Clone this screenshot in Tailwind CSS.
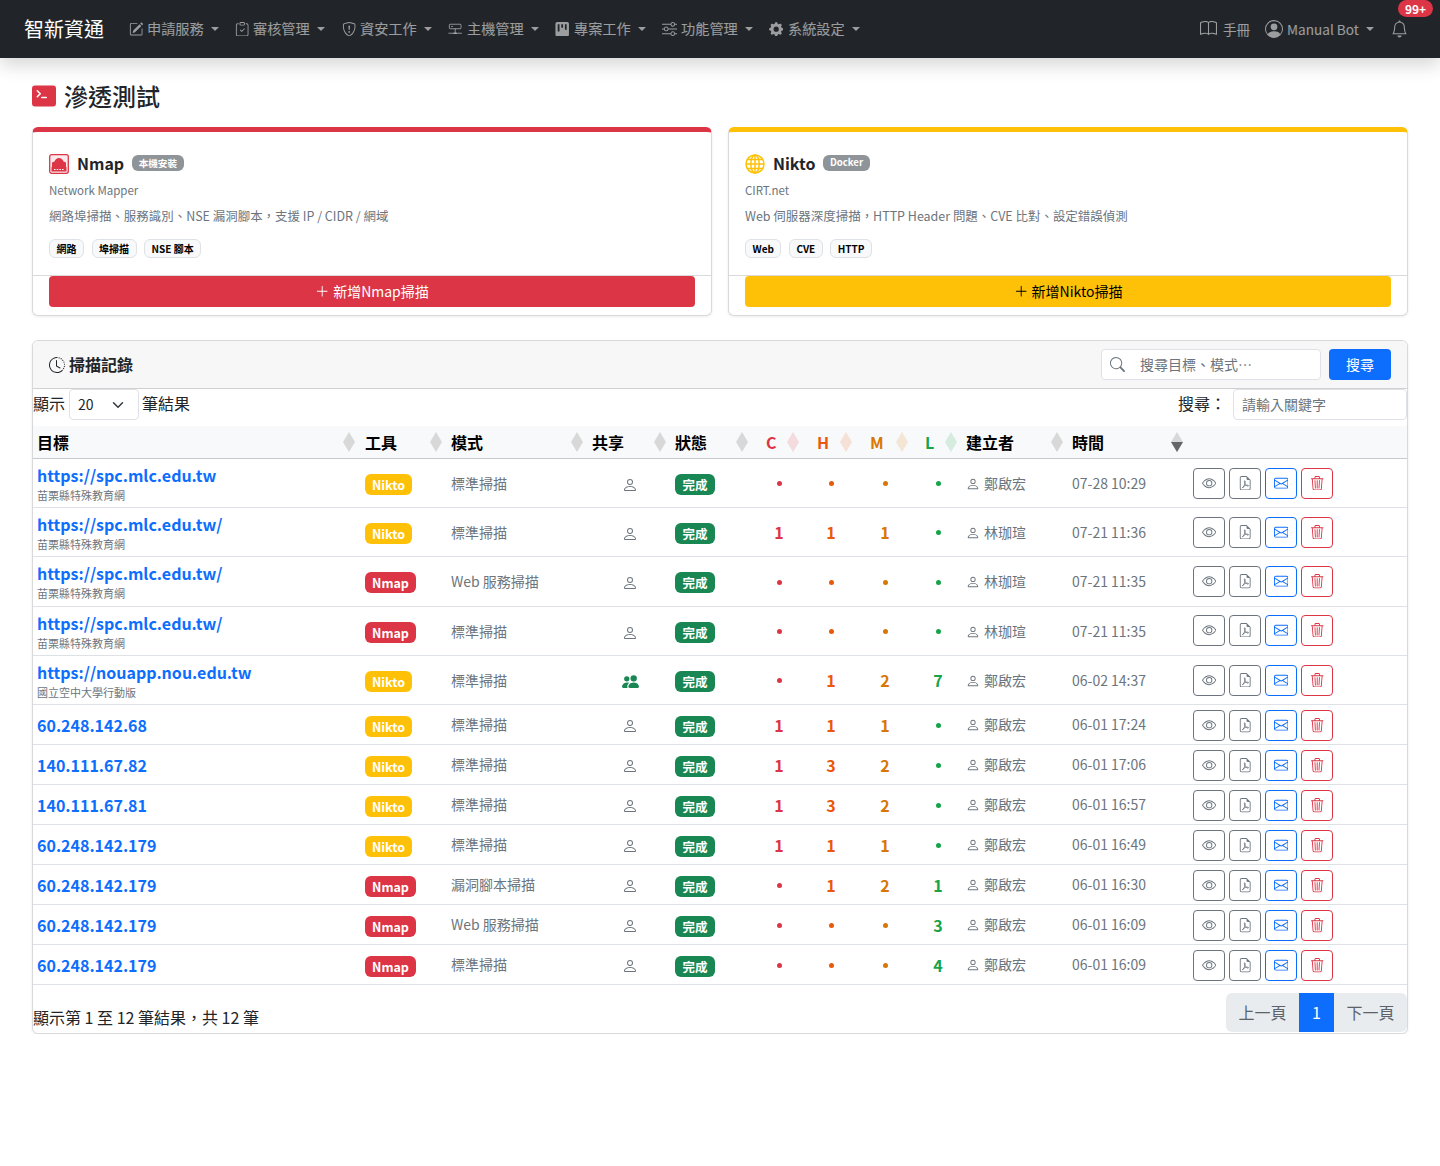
<!DOCTYPE html>
<html lang="zh-Hant">
<head>
<meta charset="utf-8">
<title>滲透測試</title>
<script src="https://cdn.jsdelivr.net/npm/@tailwindcss/browser@4"></script>
</head>
<body class="bg-white text-[#212529] font-['Noto_Sans_CJK_TC','Noto_Sans',sans-serif]">
<svg class="hidden" xmlns="http://www.w3.org/2000/svg">
<symbol id="i-sort" viewBox="0 0 12 20"><polygon points="6,0 12,10 0,10"/><polygon points="0,10 12,10 6,20"/></symbol>
<symbol id="i-person" viewBox="0 0 16 16"><path d="M8 8a3 3 0 1 0 0-6 3 3 0 0 0 0 6m2-3a2 2 0 1 1-4 0 2 2 0 0 1 4 0m4 8c0 1-1 1-1 1H3s-1 0-1-1 1-4 6-4 6 3 6 4m-1-.004c-.001-.246-.154-.986-.832-1.664C11.516 10.68 10.289 10 8 10s-3.516.68-4.168 1.332c-.678.678-.83 1.418-.832 1.664z"/></symbol>
<symbol id="i-people" viewBox="0 0 16 16"><path d="M7 14s-1 0-1-1 1-4 5-4 5 3 5 4-1 1-1 1zm4-6a3 3 0 1 0 0-6 3 3 0 0 0 0 6m-5.784 6A2.24 2.24 0 0 1 5 13c0-1.355.68-2.75 1.936-3.72A6.3 6.3 0 0 0 5 9c-4 0-5 3-5 4s1 1 1 1zM4.500 8a2.500 2.500 0 1 0 0-5 2.500 2.500 0 0 0 0 5"/></symbol>
<symbol id="i-eye" viewBox="0 0 16 16"><path d="M16 8s-3-5.500-8-5.500S0 8 0 8s3 5.500 8 5.500S16 8 16 8M1.173 8a13 13 0 0 1 1.660-2.043C4.120 4.668 5.880 3.500 8 3.500s3.879 1.168 5.168 2.457A13 13 0 0 1 14.828 8q-.086.130-.195.288c-.335.480-.830 1.120-1.465 1.755C11.879 11.332 10.119 12.500 8 12.500s-3.879-1.168-5.168-2.457A13 13 0 0 1 1.172 8z"/><path d="M8 5.500a2.500 2.500 0 1 0 0 5 2.500 2.500 0 0 0 0-5M4.500 8a3.500 3.500 0 1 1 7 0 3.500 3.500 0 0 1-7 0"/></symbol>
<symbol id="i-pdf" viewBox="0 0 16 16"><path d="M14 14V4.500L9.500 0H4a2 2 0 0 0-2 2v12a2 2 0 0 0 2 2h8a2 2 0 0 0 2-2M9.500 3A1.500 1.500 0 0 0 11 4.500h2V14a1 1 0 0 1-1 1H4a1 1 0 0 1-1-1V2a1 1 0 0 1 1-1h5.500z"/><path fill="none" stroke="currentColor" stroke-width=".9" d="M4.800 13.400c1.300-.9 3.200-4.400 3.200-7.400 0-1-.9-1-.9 0 0 2.200 2 5 3.800 5.300 1 .2 1-1 .2-1.100-1.800-.3-4.600.4-6.300 3.200z"/></symbol>
<symbol id="i-mail" viewBox="0 0 16 16"><path d="M0 4a2 2 0 0 1 2-2h12a2 2 0 0 1 2 2v8a2 2 0 0 1-2 2H2a2 2 0 0 1-2-2zm2-1a1 1 0 0 0-1 1v.217l7 4.200 7-4.200V4a1 1 0 0 0-1-1zm13 2.383-4.708 2.825L15 11.105zm-.034 6.876-5.640-3.471L8 9.583l-1.326-.795-5.640 3.470A1 1 0 0 0 2 13h12a1 1 0 0 0 .966-.741M1 11.105l4.708-2.897L1 5.383z"/></symbol>
<symbol id="i-trash" viewBox="0 0 16 16"><path d="M6.500 1h3a.5.5 0 0 1 .5.5v1H6v-1a.5.5 0 0 1 .5-.5M11 2.500v-1A1.500 1.500 0 0 0 9.500 0h-3A1.500 1.500 0 0 0 5 1.500v1H1.500a.5.5 0 0 0 0 1h.538l.853 10.660A2 2 0 0 0 4.885 16h6.230a2 2 0 0 0 1.994-1.840l.853-10.660h.538a.5.5 0 0 0 0-1zm1.958 1-.846 10.580a1 1 0 0 1-.997.920h-6.230a1 1 0 0 1-.997-.920L3.042 3.500zm-7.487 1a.5.5 0 0 1 .528.470l.5 8.500a.5.5 0 0 1-.998.060L5 5.030a.5.5 0 0 1 .47-.530Zm5.058 0a.5.5 0 0 1 .47.530l-.5 8.500a.5.5 0 1 1-.998-.060l.5-8.500a.5.5 0 0 1 .528-.470M8 4.500a.5.5 0 0 1 .5.5v8.500a.5.5 0 0 1-1 0V5a.5.5 0 0 1 .5-.5"/></symbol>
</svg>

<nav class="h-[58px] bg-[#212529] flex items-center pl-[24px] pr-[32px] shadow-[0_8px_16px_rgba(0,0,0,0.15)] text-white/55 text-[14.2px] relative">
  <span class="w-[97px] text-[20px] text-white leading-none">智新資通</span>
  <div class="flex items-center">
    <a class="flex items-center w-[106px] px-[8px]"><svg class="w-[14.4px] h-[14.4px] mr-[3.6px] shrink-0" viewBox="0 0 16 16" fill="currentColor"><path d="M15.502 1.940a.5.5 0 0 1 0 .706L14.459 3.690l-2-2L13.502.646a.5.5 0 0 1 .707 0l1.293 1.293zm-1.750 2.456-2-2L4.939 9.210a.5.5 0 0 0-.121.196l-.805 2.414a.25.25 0 0 0 .316.316l2.414-.805a.5.5 0 0 0 .196-.120l6.813-6.814z"/><path fill-rule="evenodd" d="M1 13.500A1.500 1.500 0 0 0 2.500 15h11a1.500 1.500 0 0 0 1.500-1.500v-6a.5.5 0 0 0-1 0v6a.5.5 0 0 1-.5.5h-11a.5.5 0 0 1-.5-.5v-11a.5.5 0 0 1 .5-.5H9a.5.5 0 0 0 0-1H2.500A1.500 1.500 0 0 0 1 2.500z"/></svg><span class="whitespace-nowrap">申請服務</span><i class="ml-[7px] w-0 h-0 border-x-[4px] border-t-[4px] border-x-transparent border-t-white/55"></i></a>
    <a class="flex items-center w-[107px] px-[8px]"><svg class="w-[14.4px] h-[14.4px] mr-[3.6px] shrink-0" viewBox="0 0 16 16" fill="currentColor"><path fill-rule="evenodd" d="M10.854 7.146a.5.5 0 0 1 0 .708l-3 3a.5.5 0 0 1-.708 0l-1.500-1.500a.5.5 0 1 1 .708-.708L7.500 9.793l2.646-2.647a.5.5 0 0 1 .708 0"/><path d="M4 1.500H3a2 2 0 0 0-2 2V14a2 2 0 0 0 2 2h10a2 2 0 0 0 2-2V3.500a2 2 0 0 0-2-2h-1v1h1a1 1 0 0 1 1 1V14a1 1 0 0 1-1 1H3a1 1 0 0 1-1-1V3.500a1 1 0 0 1 1-1h1z"/><path d="M9.500 1a.5.5 0 0 1 .5.5v1a.5.5 0 0 1-.5.5h-3a.5.5 0 0 1-.5-.5v-1a.5.5 0 0 1 .5-.5zm-3-1A1.500 1.500 0 0 0 5 1.500v1A1.500 1.500 0 0 0 6.500 4h3A1.500 1.500 0 0 0 11 2.500v-1A1.500 1.500 0 0 0 9.500 0z"/></svg><span class="whitespace-nowrap">審核管理</span><i class="ml-[7px] w-0 h-0 border-x-[4px] border-t-[4px] border-x-transparent border-t-white/55"></i></a>
    <a class="flex items-center w-[106px] px-[8px]"><svg class="w-[14.4px] h-[14.4px] mr-[3.6px] shrink-0" viewBox="0 0 16 16" fill="currentColor"><path d="M5.338 1.590a61 61 0 0 0-2.837.856.48.48 0 0 0-.328.390c-.554 4.157.726 7.190 2.253 9.188a10.700 10.700 0 0 0 2.287 2.233c.346.244.652.420.893.533q.180.085.293.118a1 1 0 0 0 .101.025 1 1 0 0 0 .100-.025q.114-.034.294-.118c.240-.113.547-.290.893-.533a10.700 10.700 0 0 0 2.287-2.233c1.527-1.997 2.807-5.031 2.253-9.188a.48.48 0 0 0-.328-.390c-.651-.213-1.750-.560-2.837-.855C9.552 1.290 8.531 1.067 8 1.067c-.530 0-1.552.223-2.662.524zM5.072.56C6.157.265 7.310 0 8 0s1.843.265 2.928.56c1.110.3 2.229.655 2.887.870a1.540 1.540 0 0 1 1.044 1.262c.596 4.477-.787 7.795-2.465 9.990a11.800 11.800 0 0 1-2.517 2.453 7 7 0 0 1-1.048.625c-.280.132-.581.240-.829.240s-.548-.108-.829-.240a7 7 0 0 1-1.048-.625 11.800 11.800 0 0 1-2.517-2.453C1.928 10.487.545 7.169 1.141 2.692A1.540 1.540 0 0 1 2.185 1.430 63 63 0 0 1 5.072.56"/><path d="M7.001 11a1 1 0 1 1 2 0 1 1 0 0 1-2 0M7.100 4.995a.905.905 0 1 1 1.800 0l-.35 3.507a.553.553 0 0 1-1.100 0z"/></svg><span class="whitespace-nowrap">資安工作</span><i class="ml-[7px] w-0 h-0 border-x-[4px] border-t-[4px] border-x-transparent border-t-white/55"></i></a>
    <a class="flex items-center w-[107px] px-[8px]"><svg class="w-[14.4px] h-[14.4px] mr-[4.6px] shrink-0" viewBox="0 0 16 16" fill="none" stroke="currentColor" stroke-width="1"><rect x="1.500" y="2.500" width="13" height="5" rx="1"/><path d="M3.500 5h2M8 7.500v5M0.500 12.500h15M6 12.500h4"/></svg><span class="whitespace-nowrap">主機管理</span><i class="ml-[7px] w-0 h-0 border-x-[4px] border-t-[4px] border-x-transparent border-t-white/55"></i></a>
    <a class="flex items-center w-[107px] px-[8px]"><svg class="w-[14.4px] h-[14.4px] mr-[4.6px] shrink-0" viewBox="0 0 16 16" fill="currentColor"><path fill-rule="evenodd" d="M2.500 0A2 2 0 0 0 .5 2v12a2 2 0 0 0 2 2h11a2 2 0 0 0 2-2V2a2 2 0 0 0-2-2zM3 2.500h2v8H3zm4 0h2v4H7zm4 0h2v6h-2z"/></svg><span class="whitespace-nowrap">專案工作</span><i class="ml-[7px] w-0 h-0 border-x-[4px] border-t-[4px] border-x-transparent border-t-white/55"></i></a>
    <a class="flex items-center w-[107px] px-[8px]"><svg class="w-[15px] h-[15px] mr-[4px] shrink-0" viewBox="0 0 16 16" fill="currentColor"><path fill-rule="evenodd" d="M11.500 2a1.500 1.500 0 1 0 0 3 1.500 1.500 0 0 0 0-3M9.050 3a2.500 2.500 0 0 1 4.900 0H16v1h-2.050a2.500 2.500 0 0 1-4.900 0H0V3zM4.500 7a1.500 1.500 0 1 0 0 3 1.500 1.500 0 0 0 0-3M2.050 8a2.500 2.500 0 0 1 4.900 0H16v1H6.950a2.500 2.500 0 0 1-4.900 0H0V8zm9.450 4a1.500 1.500 0 1 0 0 3 1.500 1.500 0 0 0 0-3m-2.450 1a2.500 2.500 0 0 1 4.900 0H16v1h-2.050a2.500 2.500 0 0 1-4.900 0H0v-1z"/></svg><span class="whitespace-nowrap">功能管理</span><i class="ml-[7px] w-0 h-0 border-x-[4px] border-t-[4px] border-x-transparent border-t-white/55"></i></a>
    <a class="flex items-center px-[8px]"><svg class="w-[14.4px] h-[14.4px] mr-[4.6px] shrink-0" viewBox="0 0 16 16" fill="currentColor"><path d="M9.405 1.050c-.413-1.400-2.397-1.400-2.810 0l-.1.340a1.464 1.464 0 0 1-2.105.872l-.31-.170c-1.283-.698-2.686.705-1.987 1.987l.169.311c.446.820.023 1.841-.872 2.105l-.34.100c-1.400.413-1.400 2.397 0 2.810l.34.100a1.464 1.464 0 0 1 .872 2.105l-.17.310c-.698 1.283.705 2.686 1.987 1.987l.311-.169a1.464 1.464 0 0 1 2.105.872l.1.340c.413 1.400 2.397 1.400 2.810 0l.1-.340a1.464 1.464 0 0 1 2.105-.872l.31.170c1.283.698 2.686-.705 1.987-1.987l-.169-.311a1.464 1.464 0 0 1 .872-2.105l.34-.100c1.400-.413 1.400-2.397 0-2.810l-.34-.100a1.464 1.464 0 0 1-.872-2.105l.17-.31c.698-1.283-.705-2.686-1.987-1.987l-.311.169a1.464 1.464 0 0 1-2.105-.872zM8 10.930a2.929 2.929 0 1 1 0-5.860 2.929 2.929 0 0 1 0 5.858z"/></svg><span class="whitespace-nowrap">系統設定</span><i class="ml-[7px] w-0 h-0 border-x-[4px] border-t-[4px] border-x-transparent border-t-white/55"></i></a>
  </div>
  <div class="ml-auto flex items-center text-[13.6px]">
    <svg class="w-[17px] h-[17px] mr-[6px]" viewBox="0 0 16 16" fill="currentColor"><path d="M1 2.828c.885-.37 2.154-.769 3.388-.893 1.330-.134 2.458.063 3.112.752v9.746c-.935-.530-2.120-.603-3.213-.493-1.180.120-2.370.461-3.287.811zm7.500-.141c.654-.689 1.782-.886 3.112-.752 1.234.124 2.503.523 3.388.893v9.923c-.918-.35-2.107-.692-3.287-.810-1.094-.111-2.278-.039-3.213.492zM8 1.783C7.015.936 5.587.81 4.287.94c-1.514.153-3.042.672-3.994 1.105A.5.5 0 0 0 0 2.500v11a.5.5 0 0 0 .707.455c.882-.4 2.303-.881 3.680-1.020 1.409-.142 2.590.087 3.223.877a.5.5 0 0 0 .78 0c.633-.79 1.814-1.019 3.222-.877 1.378.139 2.800.62 3.681 1.020A.5.5 0 0 0 16 13.500v-11a.5.5 0 0 0-.293-.455c-.952-.433-2.480-.952-3.994-1.105C10.413.809 8.985.936 8 1.783"/></svg>
    <span class="w-[42px] whitespace-nowrap">手冊</span>
    <svg class="w-[18px] h-[18px] mr-[4px]" viewBox="0 0 16 16" fill="currentColor"><path d="M11 6a3 3 0 1 1-6 0 3 3 0 0 1 6 0"/><path fill-rule="evenodd" d="M0 8a8 8 0 1 1 16 0A8 8 0 0 1 0 8m8-7a7 7 0 0 0-5.468 11.370C3.242 11.226 4.805 10 8 10s4.757 1.225 5.468 2.370A7 7 0 0 0 8 1"/></svg>
    <span class="w-[72px] whitespace-nowrap">Manual Bot</span>
    <i class="ml-[7px] w-0 h-0 border-x-[4px] border-t-[4px] border-x-transparent border-t-white/55"></i>
    <span class="relative ml-[17px]">
      <svg class="block w-[17px] h-[18px]" viewBox="0 0 16 16" fill="currentColor"><path d="M8 16a2 2 0 0 0 2-2H6a2 2 0 0 0 2 2M8 1.918l-.797.161A4 4 0 0 0 4 6c0 .628-.134 2.197-.459 3.742-.16.767-.376 1.566-.663 2.258h10.244c-.287-.692-.502-1.490-.663-2.258C12.134 8.197 12 6.628 12 6a4 4 0 0 0-3.203-3.920zM14.220 12c.223.447.481.801.78 1H1c.299-.199.557-.553.78-1C2.680 10.200 3 6.880 3 6c0-2.420 1.720-4.440 4.005-4.901a1 1 0 1 1 1.990 0A5 5 0 0 1 13 6c0 .88.32 4.200 1.220 6"/></svg>
      <span class="absolute left-[7px] top-[-20px] h-[17px] w-[35px] rounded-full bg-[#dc3545] text-white text-[12px] font-bold leading-[17px] text-center">99+</span>
    </span>
  </div>
</nav>

<main class="px-[32px]">
  <div class="flex items-center h-[69px] pt-[6px]">
    <svg class="w-[24px] h-[24px] mr-[8px] text-[#dc3545]" viewBox="0 0 16 16" fill="currentColor"><path d="M0 3a2 2 0 0 1 2-2h12a2 2 0 0 1 2 2v10a2 2 0 0 1-2 2H2a2 2 0 0 1-2-2zm9.500 5.500h-3a.5.5 0 0 0 0 1h3a.5.5 0 0 0 0-1m-6.354-.354a.5.5 0 1 0 .708.708l2-2a.5.5 0 0 0 0-.708l-2-2a.5.5 0 1 0-.708.708L4.793 6.500z"/></svg>
    <h1 class="text-[24px] font-medium leading-[30px] mt-[1px]">滲透測試</h1>
  </div>

  <div class="grid grid-cols-2 gap-4">
    <section class="h-[189px] rounded-[6px] border border-black/15 border-t-[5px] border-t-[#dc3545] shadow-[0_1px_3px_rgba(0,0,0,0.08)] flex flex-col">
      <div class="px-[16px] pt-[22px] flex-1">
        <div class="flex items-center h-[20px]">
          <svg class="w-[20px] h-[20px] mr-[8px]" viewBox="0 0 20 20"><rect x=".7" y=".7" width="18.600" height="18.600" rx="2" fill="#fbe9eb" stroke="#dc3545" stroke-width="1.300"/><path d="M3 14V8.500L5.500 7.500c.7-2.200 2.500-3.500 4.500-3.500s3.800 1.300 4.500 3.500l2.500 1V14z" fill="#dc3545"/><rect x="2.500" y="13" width="15" height="4.500" fill="#dc3545"/><path d="M5 15.500h10" stroke="#fff" stroke-width="1.200" stroke-dasharray="1.500 1.200"/></svg>
          <span class="text-[16px] font-bold leading-none -mt-[2px]">Nmap</span>
          <span class="ml-[8px] h-[16px] -mt-[2px] px-[6.5px] rounded-[6px] bg-[#8f9499] text-white text-[9.6px] font-bold leading-[16px]">本機安裝</span>
        </div>
        <p class="mt-[7px] text-[11.5px] leading-[18px] text-[#6c757d]">Network Mapper</p>
        <p class="mt-[7px] text-[12.48px] leading-[20px] text-[#6c757d]">網路埠掃描、服務識別、NSE 漏洞腳本，支援 IP / CIDR / 網域</p>
        <div class="mt-[13px] flex gap-[7.5px]">
          <span class="h-[19px] px-[6.5px] rounded-[6px] bg-[#f8f9fa] border border-[#dee2e6] text-[10px] font-bold leading-[17px] text-black">網路</span>
          <span class="h-[19px] px-[6.5px] rounded-[6px] bg-[#f8f9fa] border border-[#dee2e6] text-[10px] font-bold leading-[17px] text-black">埠掃描</span>
          <span class="h-[19px] px-[6.5px] rounded-[6px] bg-[#f8f9fa] border border-[#dee2e6] text-[10px] font-bold leading-[17px] text-black">NSE 腳本</span>
        </div>
      </div>
      <div class="border-t border-black/15 px-[16px] pb-[8px]">
        <a class="h-[31px] pb-[1px] rounded-[4px] bg-[#dc3545] text-white text-[14px] flex items-center justify-center"><svg class="w-[14.4px] h-[14.4px] mr-[3.600px]" viewBox="0 0 16 16" fill="currentColor"><path fill-rule="evenodd" d="M8 2a.5.5 0 0 1 .5.5v5h5a.5.5 0 0 1 0 1h-5v5a.5.5 0 0 1-1 0v-5h-5a.5.5 0 0 1 0-1h5v-5A.5.5 0 0 1 8 2"/></svg>新增Nmap掃描</a>
      </div>
    </section>
    <section class="h-[189px] rounded-[6px] border border-black/15 border-t-[5px] border-t-[#ffc107] shadow-[0_1px_3px_rgba(0,0,0,0.08)] flex flex-col">
      <div class="px-[16px] pt-[22px] flex-1">
        <div class="flex items-center h-[20px]">
          <svg class="w-[20px] h-[20px] mr-[8px]" viewBox="0 0 20 20" fill="none" stroke="#ffc107" stroke-width="1.500"><circle cx="10" cy="10" r="9"/><ellipse cx="10" cy="10" rx="4.200" ry="9"/><path d="M10 1v18M1 10h18M2.300 5.500h15.400M2.300 14.500h15.400"/></svg>
          <span class="text-[16px] font-bold leading-none -mt-[2px]">Nikto</span>
          <span class="ml-[8px] h-[16px] -mt-[2px] px-[6.5px] rounded-[6px] bg-[#8f9499] text-white text-[9.6px] font-bold leading-[15px]">Docker</span>
        </div>
        <p class="mt-[7px] text-[11.5px] leading-[18px] text-[#6c757d]">CIRT.net</p>
        <p class="mt-[7px] text-[12.48px] leading-[20px] text-[#6c757d]">Web 伺服器深度掃描，HTTP Header 問題、CVE 比對、設定錯誤偵測</p>
        <div class="mt-[13px] flex gap-[7.5px]">
          <span class="h-[19px] px-[6.5px] rounded-[6px] bg-[#f8f9fa] border border-[#dee2e6] text-[10px] font-bold leading-[17px] text-black">Web</span>
          <span class="h-[19px] px-[6.5px] rounded-[6px] bg-[#f8f9fa] border border-[#dee2e6] text-[10px] font-bold leading-[17px] text-black">CVE</span>
          <span class="h-[19px] px-[6.5px] rounded-[6px] bg-[#f8f9fa] border border-[#dee2e6] text-[10px] font-bold leading-[17px] text-black">HTTP</span>
        </div>
      </div>
      <div class="border-t border-black/15 px-[16px] pb-[8px]">
        <a class="h-[31px] pb-[1px] rounded-[4px] bg-[#ffc107] text-black text-[14px] flex items-center justify-center"><svg class="w-[14.4px] h-[14.4px] mr-[3.600px]" viewBox="0 0 16 16" fill="currentColor"><path fill-rule="evenodd" d="M8 2a.5.5 0 0 1 .5.5v5h5a.5.5 0 0 1 0 1h-5v5a.5.5 0 0 1-1 0v-5h-5a.5.5 0 0 1 0-1h5v-5A.5.5 0 0 1 8 2"/></svg>新增Nikto掃描</a>
      </div>
    </section>
  </div>

  <section class="mt-[24px] h-[694px] rounded-[6px] border border-black/15 shadow-[0_1px_3px_rgba(0,0,0,0.08)] overflow-hidden">
    <div class="h-[48px] bg-[#f7f7f7] border-b border-[#d0d0d0] flex items-center pl-[16px] pr-[16px]">
      <svg class="w-[16px] h-[16px] mr-[4px]" viewBox="0 0 16 16" fill="currentColor"><path d="M8.515 1.019A7 7 0 0 0 8 1V0a8 8 0 0 1 .589.022zm2.004.45a7 7 0 0 0-.985-.299l.219-.976q.576.129 1.126.342zm1.370.71a7 7 0 0 0-.439-.27l.493-.87a8 8 0 0 1 .979.654l-.615.789a7 7 0 0 0-.418-.302zm1.834 1.790a7 7 0 0 0-.653-.796l.724-.69q.406.429.747.91zm.744 1.352a7 7 0 0 0-.214-.468l.893-.45a8 8 0 0 1 .45 1.088l-.95.313a7 7 0 0 0-.179-.483m.53 2.507a7 7 0 0 0-.1-1.025l.985-.17q.1.58.116 1.170zm-.131 1.538q.05-.254.081-.51l.993.123a8 8 0 0 1-.23 1.155l-.964-.267q.069-.247.12-.501m-.952 2.379q.276-.436.486-.908l.914.405q-.24.54-.555 1.038zm-.964 1.205q.183-.183.35-.378l.758.653a8 8 0 0 1-.401.432z"/><path d="M8 1a7 7 0 1 0 4.950 11.950l.707.707A8.001 8.001 0 1 1 8 0z"/><path d="M7.500 3a.5.5 0 0 1 .5.5v5.210l3.248 1.856a.5.5 0 0 1-.496.868l-3.500-2A.5.5 0 0 1 7 9V3.500a.5.5 0 0 1 .5-.5"/></svg>
      <h2 class="text-[16px] font-bold mb-[2px]">掃描記錄</h2>
      <div class="ml-auto flex items-center gap-[8px]">
        <div class="w-[220px] h-[31px] bg-white border border-[#dee2e6] rounded-[4px] flex items-center pl-[8px]">
          <svg class="w-[15px] h-[15px] text-[#6c757d] mr-[15px] shrink-0" viewBox="0 0 16 16" fill="currentColor"><path d="M11.742 10.344a6.500 6.500 0 1 0-1.397 1.398h-.001q.044.06.098.115l3.850 3.850a1 1 0 0 0 1.415-1.414l-3.850-3.850a1 1 0 0 0-.115-.1zM12 6.500a5.500 5.500 0 1 1-11 0 5.500 5.500 0 0 1 11 0"/></svg>
          <span class="text-[14px] text-[#6c757d] whitespace-nowrap">搜尋目標、模式…</span>
        </div>
        <a class="w-[62px] h-[31px] rounded-[4px] bg-[#0d6efd] text-white text-[14px] flex items-center justify-center">搜尋</a>
      </div>
    </div>

    <div class="h-[37px] flex items-start">
      <div class="h-[31px] flex items-center text-[16px]">
        <span class="mb-[3px]">顯示</span>
        <div class="w-[70px] h-[31px] ml-[4px] mr-[3px] bg-white border border-[#dee2e6] rounded-[4px] flex items-center justify-between pl-[8px] pr-[14px] text-[14px]">20<svg class="w-[12px] h-[12px]" viewBox="0 0 16 16" fill="none" stroke="#343a40" stroke-width="2" stroke-linecap="round" stroke-linejoin="round"><path d="m2 5 6 6 6-6"/></svg></div>
        <span class="mb-[3px]">筆結果</span>
      </div>
      <div class="ml-auto h-[31px] flex items-center text-[16px]">
        <span class="w-[55px] mb-[3px]">搜尋：</span>
        <input class="w-[174px] h-[31px] bg-white border border-[#dee2e6] rounded-[4px] px-[8px] pb-[2px] text-[14px] placeholder:text-[#6c757d]" placeholder="請輸入關鍵字">
      </div>
    </div>

    <table class="w-[1374px] table-fixed border-separate border-spacing-0 [&_td]:border-b [&_td]:border-[#dee2e6] [&_td]:px-[5px] [&_td]:align-middle [&_td:first-child]:pl-[4px] [&_th:first-child]:pl-[4px] [&_th]:relative [&_th]:h-[33px] [&_th]:bg-[#f8f9fa] [&_th]:border-b [&_th]:border-[#c8c9ca] [&_th]:px-[5px] [&_th]:text-left [&_th]:text-[16px] [&_th]:font-bold [&_th]:text-black">
      <colgroup><col class="w-[327px]"><col class="w-[86px]"><col class="w-[141px]"><col class="w-[83px]"><col class="w-[91px]"><col class="w-[51px]"><col class="w-[53px]"><col class="w-[55px]"><col class="w-[41px]"><col class="w-[106px]"><col class="w-[121px]"><col class="w-[219px]"></colgroup>
      <thead>
        <tr>
          <th>目標<svg class="absolute right-[5px] top-[6px] w-[12px] h-[20px] text-[#d8d8d8] fill-current"><use href="#i-sort"/></svg></th>
          <th>工具<svg class="absolute right-[4px] top-[6px] w-[12px] h-[20px] text-[#d8d8d8] fill-current"><use href="#i-sort"/></svg></th>
          <th>模式<svg class="absolute right-[4px] top-[6px] w-[12px] h-[20px] text-[#d8d8d8] fill-current"><use href="#i-sort"/></svg></th>
          <th>共享<svg class="absolute right-[4px] top-[6px] w-[12px] h-[20px] text-[#d8d8d8] fill-current"><use href="#i-sort"/></svg></th>
          <th>狀態<svg class="absolute right-[13px] top-[6px] w-[12px] h-[20px] text-[#d8d8d8] fill-current"><use href="#i-sort"/></svg></th>
          <th class="text-[#dc3545]!">C<svg class="absolute right-[13px] top-[6px] w-[12px] h-[20px] text-[#dc3545]/15 fill-current"><use href="#i-sort"/></svg></th>
          <th class="text-[#ea580c]!">H<svg class="absolute right-[13px] top-[6px] w-[12px] h-[20px] text-[#ea580c]/15 fill-current"><use href="#i-sort"/></svg></th>
          <th class="text-[#d97706]!">M<svg class="absolute right-[12px] top-[6px] w-[12px] h-[20px] text-[#d97706]/15 fill-current"><use href="#i-sort"/></svg></th>
          <th class="text-[#16a34a]!">L<svg class="absolute right-[4px] top-[6px] w-[12px] h-[20px] text-[#16a34a]/15 fill-current"><use href="#i-sort"/></svg></th>
          <th>建立者<svg class="absolute right-[4px] top-[6px] w-[12px] h-[20px] text-[#d8d8d8] fill-current"><use href="#i-sort"/></svg></th>
          <th>時間<svg class="absolute right-[5px] top-[6px] w-[12px] h-[20px] text-[#d8d8d8] fill-current"><use href="#i-sort"/></svg><svg class="absolute right-[5px] top-[16px] w-[12px] h-[10px] text-[#666] fill-current" viewBox="0 0 12 10"><polygon points="0,0 12,0 6,10"/></svg></th>
          <th></th>
        </tr>
      </thead>
      <tbody class="text-[14px] text-[#6c757d]">
        <!-- row 1 -->
        <tr class="h-[49px]">
          <td class="pt-[2px]"><a class="block text-[16px] font-bold leading-[21px] text-[#0d6efd]">https://spc.mlc.edu.tw</a><span class="block text-[11px] leading-[16px] mt-[1px]">苗栗縣特殊教育網</span></td>
          <td><span class="inline-block relative top-[1px] w-[47px] h-[21px] rounded-[6px] bg-[#ffc107] text-white text-[12.5px] font-bold leading-[21px] text-center">Nikto</span></td>
          <td>標準掃描</td>
          <td class="text-center"><svg class="inline-block w-[16px] h-[16px] fill-current ml-[3px]"><use href="#i-person"/></svg></td>
          <td><span class="inline-block relative top-[1px] w-[40px] h-[21px] rounded-[6px] bg-[#198754] text-white text-[12.5px] font-bold leading-[21px] text-center">完成</span></td>
          <td class="pr-[20px]! text-center"><i class="inline-block relative -top-[1px] w-[5px] h-[5px] rounded-full bg-[#dc3545] align-middle"></i></td>
          <td class="pr-[20px]! text-center"><i class="inline-block relative -top-[1px] w-[5px] h-[5px] rounded-full bg-[#ea580c] align-middle"></i></td>
          <td class="pr-[20px]! text-center"><i class="inline-block relative -top-[1px] w-[5px] h-[5px] rounded-full bg-[#d97706] align-middle"></i></td>
          <td class="pr-[10px]! text-center"><i class="inline-block relative -top-[1px] w-[5px] h-[5px] rounded-full bg-[#16a34a] align-middle"></i></td>
          <td class="whitespace-nowrap"><svg class="inline-block w-[14px] h-[14px] fill-current mr-[4px] align-[-2px]"><use href="#i-person"/></svg>鄭啟宏</td>
          <td>07-28 10:29</td>
          <td><div class="flex gap-[4px]"><a class="w-[32px] h-[31px] rounded-[4px] border border-[#6c757d] flex items-center justify-center"><svg class="w-[14.4px] h-[14.4px] fill-current"><use href="#i-eye"/></svg></a><a class="w-[32px] h-[31px] rounded-[4px] border border-[#6c757d] flex items-center justify-center"><svg class="w-[14.4px] h-[14.4px] fill-current text-[#6c757d] stroke-none"><use href="#i-pdf"/></svg></a><a class="w-[32px] h-[31px] rounded-[4px] border border-[#0d6efd] text-[#0d6efd] flex items-center justify-center"><svg class="w-[14.4px] h-[14.4px] fill-current"><use href="#i-mail"/></svg></a><a class="w-[32px] h-[31px] rounded-[4px] border border-[#dc3545] text-[#dc3545] flex items-center justify-center"><svg class="w-[14.4px] h-[14.4px] fill-current"><use href="#i-trash"/></svg></a></div></td>
        </tr>
        <!-- row 2 -->
        <tr class="h-[49px]">
          <td class="pt-[2px]"><a class="block text-[16px] font-bold leading-[21px] text-[#0d6efd]">https://spc.mlc.edu.tw/</a><span class="block text-[11px] leading-[16px] mt-[1px]">苗栗縣特殊教育網</span></td>
          <td><span class="inline-block relative top-[1px] w-[47px] h-[21px] rounded-[6px] bg-[#ffc107] text-white text-[12.5px] font-bold leading-[21px] text-center">Nikto</span></td>
          <td>標準掃描</td>
          <td class="text-center"><svg class="inline-block w-[16px] h-[16px] fill-current ml-[3px]"><use href="#i-person"/></svg></td>
          <td><span class="inline-block relative top-[1px] w-[40px] h-[21px] rounded-[6px] bg-[#198754] text-white text-[12.5px] font-bold leading-[21px] text-center">完成</span></td>
          <td class="pr-[20px]! text-center text-[16px] font-bold text-[#dc3545]">1</td>
          <td class="pr-[20px]! text-center text-[16px] font-bold text-[#ea580c]">1</td>
          <td class="pr-[20px]! text-center text-[16px] font-bold text-[#d97706]">1</td>
          <td class="pr-[10px]! text-center"><i class="inline-block relative -top-[1px] w-[5px] h-[5px] rounded-full bg-[#16a34a] align-middle"></i></td>
          <td class="whitespace-nowrap"><svg class="inline-block w-[14px] h-[14px] fill-current mr-[4px] align-[-2px]"><use href="#i-person"/></svg>林珈瑄</td>
          <td>07-21 11:36</td>
          <td><div class="flex gap-[4px]"><a class="w-[32px] h-[31px] rounded-[4px] border border-[#6c757d] flex items-center justify-center"><svg class="w-[14.4px] h-[14.4px] fill-current"><use href="#i-eye"/></svg></a><a class="w-[32px] h-[31px] rounded-[4px] border border-[#6c757d] flex items-center justify-center"><svg class="w-[14.4px] h-[14.4px] fill-current text-[#6c757d] stroke-none"><use href="#i-pdf"/></svg></a><a class="w-[32px] h-[31px] rounded-[4px] border border-[#0d6efd] text-[#0d6efd] flex items-center justify-center"><svg class="w-[14.4px] h-[14.4px] fill-current"><use href="#i-mail"/></svg></a><a class="w-[32px] h-[31px] rounded-[4px] border border-[#dc3545] text-[#dc3545] flex items-center justify-center"><svg class="w-[14.4px] h-[14.4px] fill-current"><use href="#i-trash"/></svg></a></div></td>
        </tr>
        <!-- row 3 -->
        <tr class="h-[50px]">
          <td class="pt-[1px]"><a class="block text-[16px] font-bold leading-[21px] text-[#0d6efd]">https://spc.mlc.edu.tw/</a><span class="block text-[11px] leading-[16px] mt-[1px]">苗栗縣特殊教育網</span></td>
          <td><span class="inline-block relative top-[1px] w-[51px] h-[21px] rounded-[6px] bg-[#dc3545] text-white text-[12.5px] font-bold leading-[21px] text-center">Nmap</span></td>
          <td>Web 服務掃描</td>
          <td class="text-center"><svg class="inline-block w-[16px] h-[16px] fill-current ml-[3px]"><use href="#i-person"/></svg></td>
          <td><span class="inline-block relative top-[1px] w-[40px] h-[21px] rounded-[6px] bg-[#198754] text-white text-[12.5px] font-bold leading-[21px] text-center">完成</span></td>
          <td class="pr-[20px]! text-center"><i class="inline-block relative -top-[1px] w-[5px] h-[5px] rounded-full bg-[#dc3545] align-middle"></i></td>
          <td class="pr-[20px]! text-center"><i class="inline-block relative -top-[1px] w-[5px] h-[5px] rounded-full bg-[#ea580c] align-middle"></i></td>
          <td class="pr-[20px]! text-center"><i class="inline-block relative -top-[1px] w-[5px] h-[5px] rounded-full bg-[#d97706] align-middle"></i></td>
          <td class="pr-[10px]! text-center"><i class="inline-block relative -top-[1px] w-[5px] h-[5px] rounded-full bg-[#16a34a] align-middle"></i></td>
          <td class="whitespace-nowrap"><svg class="inline-block w-[14px] h-[14px] fill-current mr-[4px] align-[-2px]"><use href="#i-person"/></svg>林珈瑄</td>
          <td>07-21 11:35</td>
          <td><div class="flex gap-[4px]"><a class="w-[32px] h-[31px] rounded-[4px] border border-[#6c757d] flex items-center justify-center"><svg class="w-[14.4px] h-[14.4px] fill-current"><use href="#i-eye"/></svg></a><a class="w-[32px] h-[31px] rounded-[4px] border border-[#6c757d] flex items-center justify-center"><svg class="w-[14.4px] h-[14.4px] fill-current text-[#6c757d] stroke-none"><use href="#i-pdf"/></svg></a><a class="w-[32px] h-[31px] rounded-[4px] border border-[#0d6efd] text-[#0d6efd] flex items-center justify-center"><svg class="w-[14.4px] h-[14.4px] fill-current"><use href="#i-mail"/></svg></a><a class="w-[32px] h-[31px] rounded-[4px] border border-[#dc3545] text-[#dc3545] flex items-center justify-center"><svg class="w-[14.4px] h-[14.4px] fill-current"><use href="#i-trash"/></svg></a></div></td>
        </tr>
        <!-- row 4 -->
        <tr class="h-[49px]">
          <td class="pt-[2px]"><a class="block text-[16px] font-bold leading-[21px] text-[#0d6efd]">https://spc.mlc.edu.tw/</a><span class="block text-[11px] leading-[16px] mt-[1px]">苗栗縣特殊教育網</span></td>
          <td><span class="inline-block relative top-[1px] w-[51px] h-[21px] rounded-[6px] bg-[#dc3545] text-white text-[12.5px] font-bold leading-[21px] text-center">Nmap</span></td>
          <td>標準掃描</td>
          <td class="text-center"><svg class="inline-block w-[16px] h-[16px] fill-current ml-[3px]"><use href="#i-person"/></svg></td>
          <td><span class="inline-block relative top-[1px] w-[40px] h-[21px] rounded-[6px] bg-[#198754] text-white text-[12.5px] font-bold leading-[21px] text-center">完成</span></td>
          <td class="pr-[20px]! text-center"><i class="inline-block relative -top-[1px] w-[5px] h-[5px] rounded-full bg-[#dc3545] align-middle"></i></td>
          <td class="pr-[20px]! text-center"><i class="inline-block relative -top-[1px] w-[5px] h-[5px] rounded-full bg-[#ea580c] align-middle"></i></td>
          <td class="pr-[20px]! text-center"><i class="inline-block relative -top-[1px] w-[5px] h-[5px] rounded-full bg-[#d97706] align-middle"></i></td>
          <td class="pr-[10px]! text-center"><i class="inline-block relative -top-[1px] w-[5px] h-[5px] rounded-full bg-[#16a34a] align-middle"></i></td>
          <td class="whitespace-nowrap"><svg class="inline-block w-[14px] h-[14px] fill-current mr-[4px] align-[-2px]"><use href="#i-person"/></svg>林珈瑄</td>
          <td>07-21 11:35</td>
          <td class="pb-[2px]"><div class="flex gap-[4px]"><a class="w-[32px] h-[31px] rounded-[4px] border border-[#6c757d] flex items-center justify-center"><svg class="w-[14.4px] h-[14.4px] fill-current"><use href="#i-eye"/></svg></a><a class="w-[32px] h-[31px] rounded-[4px] border border-[#6c757d] flex items-center justify-center"><svg class="w-[14.4px] h-[14.4px] fill-current text-[#6c757d] stroke-none"><use href="#i-pdf"/></svg></a><a class="w-[32px] h-[31px] rounded-[4px] border border-[#0d6efd] text-[#0d6efd] flex items-center justify-center"><svg class="w-[14.4px] h-[14.4px] fill-current"><use href="#i-mail"/></svg></a><a class="w-[32px] h-[31px] rounded-[4px] border border-[#dc3545] text-[#dc3545] flex items-center justify-center"><svg class="w-[14.4px] h-[14.4px] fill-current"><use href="#i-trash"/></svg></a></div></td>
        </tr>
        <!-- row 5 -->
        <tr class="h-[49px]">
          <td class="pt-[2px]"><a class="block text-[16px] font-bold leading-[21px] text-[#0d6efd]">https://nouapp.nou.edu.tw</a><span class="block text-[11px] leading-[16px] mt-[1px]">國立空中大學行動版</span></td>
          <td><span class="inline-block relative top-[1px] w-[47px] h-[21px] rounded-[6px] bg-[#ffc107] text-white text-[12.5px] font-bold leading-[21px] text-center">Nikto</span></td>
          <td>標準掃描</td>
          <td class="text-center"><svg class="inline-block w-[17px] h-[17px] fill-current ml-[3px] text-[#198754]"><use href="#i-people"/></svg></td>
          <td><span class="inline-block relative top-[1px] w-[40px] h-[21px] rounded-[6px] bg-[#198754] text-white text-[12.5px] font-bold leading-[21px] text-center">完成</span></td>
          <td class="pr-[20px]! text-center"><i class="inline-block relative -top-[1px] w-[5px] h-[5px] rounded-full bg-[#dc3545] align-middle"></i></td>
          <td class="pr-[20px]! text-center text-[16px] font-bold text-[#ea580c]">1</td>
          <td class="pr-[20px]! text-center text-[16px] font-bold text-[#d97706]">2</td>
          <td class="pr-[10px]! text-center text-[16px] font-bold text-[#16a34a]">7</td>
          <td class="whitespace-nowrap"><svg class="inline-block w-[14px] h-[14px] fill-current mr-[4px] align-[-2px]"><use href="#i-person"/></svg>鄭啟宏</td>
          <td>06-02 14:37</td>
          <td><div class="flex gap-[4px]"><a class="w-[32px] h-[31px] rounded-[4px] border border-[#6c757d] flex items-center justify-center"><svg class="w-[14.4px] h-[14.4px] fill-current"><use href="#i-eye"/></svg></a><a class="w-[32px] h-[31px] rounded-[4px] border border-[#6c757d] flex items-center justify-center"><svg class="w-[14.4px] h-[14.4px] fill-current text-[#6c757d] stroke-none"><use href="#i-pdf"/></svg></a><a class="w-[32px] h-[31px] rounded-[4px] border border-[#0d6efd] text-[#0d6efd] flex items-center justify-center"><svg class="w-[14.4px] h-[14.4px] fill-current"><use href="#i-mail"/></svg></a><a class="w-[32px] h-[31px] rounded-[4px] border border-[#dc3545] text-[#dc3545] flex items-center justify-center"><svg class="w-[14.4px] h-[14.4px] fill-current"><use href="#i-trash"/></svg></a></div></td>
        </tr>
        <!-- row 6 -->
        <tr class="h-[40px]">
          <td class="pt-[1px]"><a class="block text-[16px] font-bold leading-[21px] text-[#0d6efd]">60.248.142.68</a></td>
          <td><span class="inline-block relative top-[2px] w-[47px] h-[21px] rounded-[6px] bg-[#ffc107] text-white text-[12.5px] font-bold leading-[21px] text-center">Nikto</span></td>
          <td>標準掃描</td>
          <td class="text-center"><svg class="inline-block w-[16px] h-[16px] fill-current ml-[3px]"><use href="#i-person"/></svg></td>
          <td><span class="inline-block relative top-[2px] w-[40px] h-[21px] rounded-[6px] bg-[#198754] text-white text-[12.5px] font-bold leading-[21px] text-center">完成</span></td>
          <td class="pr-[20px]! text-center text-[16px] font-bold text-[#dc3545]">1</td>
          <td class="pr-[20px]! text-center text-[16px] font-bold text-[#ea580c]">1</td>
          <td class="pr-[20px]! text-center text-[16px] font-bold text-[#d97706]">1</td>
          <td class="pr-[10px]! text-center"><i class="inline-block relative -top-[1px] w-[5px] h-[5px] rounded-full bg-[#16a34a] align-middle"></i></td>
          <td class="whitespace-nowrap"><svg class="inline-block w-[14px] h-[14px] fill-current mr-[4px] align-[-2px]"><use href="#i-person"/></svg>鄭啟宏</td>
          <td>06-01 17:24</td>
          <td class="pt-[2px]"><div class="flex gap-[4px]"><a class="w-[32px] h-[31px] rounded-[4px] border border-[#6c757d] flex items-center justify-center"><svg class="w-[14.4px] h-[14.4px] fill-current"><use href="#i-eye"/></svg></a><a class="w-[32px] h-[31px] rounded-[4px] border border-[#6c757d] flex items-center justify-center"><svg class="w-[14.4px] h-[14.4px] fill-current text-[#6c757d] stroke-none"><use href="#i-pdf"/></svg></a><a class="w-[32px] h-[31px] rounded-[4px] border border-[#0d6efd] text-[#0d6efd] flex items-center justify-center"><svg class="w-[14.4px] h-[14.4px] fill-current"><use href="#i-mail"/></svg></a><a class="w-[32px] h-[31px] rounded-[4px] border border-[#dc3545] text-[#dc3545] flex items-center justify-center"><svg class="w-[14.4px] h-[14.4px] fill-current"><use href="#i-trash"/></svg></a></div></td>
        </tr>
        <!-- row 7 -->
        <tr class="h-[40px]">
          <td class="pt-[1px]"><a class="block text-[16px] font-bold leading-[21px] text-[#0d6efd]">140.111.67.82</a></td>
          <td><span class="inline-block relative top-[2px] w-[47px] h-[21px] rounded-[6px] bg-[#ffc107] text-white text-[12.5px] font-bold leading-[21px] text-center">Nikto</span></td>
          <td>標準掃描</td>
          <td class="text-center"><svg class="inline-block w-[16px] h-[16px] fill-current ml-[3px]"><use href="#i-person"/></svg></td>
          <td><span class="inline-block relative top-[2px] w-[40px] h-[21px] rounded-[6px] bg-[#198754] text-white text-[12.5px] font-bold leading-[21px] text-center">完成</span></td>
          <td class="pr-[20px]! text-center text-[16px] font-bold text-[#dc3545]">1</td>
          <td class="pr-[20px]! text-center text-[16px] font-bold text-[#ea580c]">3</td>
          <td class="pr-[20px]! text-center text-[16px] font-bold text-[#d97706]">2</td>
          <td class="pr-[10px]! text-center"><i class="inline-block relative -top-[1px] w-[5px] h-[5px] rounded-full bg-[#16a34a] align-middle"></i></td>
          <td class="whitespace-nowrap"><svg class="inline-block w-[14px] h-[14px] fill-current mr-[4px] align-[-2px]"><use href="#i-person"/></svg>鄭啟宏</td>
          <td>06-01 17:06</td>
          <td class="pt-[2px]"><div class="flex gap-[4px]"><a class="w-[32px] h-[31px] rounded-[4px] border border-[#6c757d] flex items-center justify-center"><svg class="w-[14.4px] h-[14.4px] fill-current"><use href="#i-eye"/></svg></a><a class="w-[32px] h-[31px] rounded-[4px] border border-[#6c757d] flex items-center justify-center"><svg class="w-[14.4px] h-[14.4px] fill-current text-[#6c757d] stroke-none"><use href="#i-pdf"/></svg></a><a class="w-[32px] h-[31px] rounded-[4px] border border-[#0d6efd] text-[#0d6efd] flex items-center justify-center"><svg class="w-[14.4px] h-[14.4px] fill-current"><use href="#i-mail"/></svg></a><a class="w-[32px] h-[31px] rounded-[4px] border border-[#dc3545] text-[#dc3545] flex items-center justify-center"><svg class="w-[14.4px] h-[14.4px] fill-current"><use href="#i-trash"/></svg></a></div></td>
        </tr>
        <!-- row 8 -->
        <tr class="h-[40px]">
          <td class="pt-[1px]"><a class="block text-[16px] font-bold leading-[21px] text-[#0d6efd]">140.111.67.81</a></td>
          <td><span class="inline-block relative top-[2px] w-[47px] h-[21px] rounded-[6px] bg-[#ffc107] text-white text-[12.5px] font-bold leading-[21px] text-center">Nikto</span></td>
          <td>標準掃描</td>
          <td class="text-center"><svg class="inline-block w-[16px] h-[16px] fill-current ml-[3px]"><use href="#i-person"/></svg></td>
          <td><span class="inline-block relative top-[2px] w-[40px] h-[21px] rounded-[6px] bg-[#198754] text-white text-[12.5px] font-bold leading-[21px] text-center">完成</span></td>
          <td class="pr-[20px]! text-center text-[16px] font-bold text-[#dc3545]">1</td>
          <td class="pr-[20px]! text-center text-[16px] font-bold text-[#ea580c]">3</td>
          <td class="pr-[20px]! text-center text-[16px] font-bold text-[#d97706]">2</td>
          <td class="pr-[10px]! text-center"><i class="inline-block relative -top-[1px] w-[5px] h-[5px] rounded-full bg-[#16a34a] align-middle"></i></td>
          <td class="whitespace-nowrap"><svg class="inline-block w-[14px] h-[14px] fill-current mr-[4px] align-[-2px]"><use href="#i-person"/></svg>鄭啟宏</td>
          <td>06-01 16:57</td>
          <td class="pt-[2px]"><div class="flex gap-[4px]"><a class="w-[32px] h-[31px] rounded-[4px] border border-[#6c757d] flex items-center justify-center"><svg class="w-[14.4px] h-[14.4px] fill-current"><use href="#i-eye"/></svg></a><a class="w-[32px] h-[31px] rounded-[4px] border border-[#6c757d] flex items-center justify-center"><svg class="w-[14.4px] h-[14.4px] fill-current text-[#6c757d] stroke-none"><use href="#i-pdf"/></svg></a><a class="w-[32px] h-[31px] rounded-[4px] border border-[#0d6efd] text-[#0d6efd] flex items-center justify-center"><svg class="w-[14.4px] h-[14.4px] fill-current"><use href="#i-mail"/></svg></a><a class="w-[32px] h-[31px] rounded-[4px] border border-[#dc3545] text-[#dc3545] flex items-center justify-center"><svg class="w-[14.4px] h-[14.4px] fill-current"><use href="#i-trash"/></svg></a></div></td>
        </tr>
        <!-- row 9 -->
        <tr class="h-[40px]">
          <td class="pt-[1px]"><a class="block text-[16px] font-bold leading-[21px] text-[#0d6efd]">60.248.142.179</a></td>
          <td><span class="inline-block relative top-[2px] w-[47px] h-[21px] rounded-[6px] bg-[#ffc107] text-white text-[12.5px] font-bold leading-[21px] text-center">Nikto</span></td>
          <td>標準掃描</td>
          <td class="text-center"><svg class="inline-block w-[16px] h-[16px] fill-current ml-[3px]"><use href="#i-person"/></svg></td>
          <td><span class="inline-block relative top-[2px] w-[40px] h-[21px] rounded-[6px] bg-[#198754] text-white text-[12.5px] font-bold leading-[21px] text-center">完成</span></td>
          <td class="pr-[20px]! text-center text-[16px] font-bold text-[#dc3545]">1</td>
          <td class="pr-[20px]! text-center text-[16px] font-bold text-[#ea580c]">1</td>
          <td class="pr-[20px]! text-center text-[16px] font-bold text-[#d97706]">1</td>
          <td class="pr-[10px]! text-center"><i class="inline-block relative -top-[1px] w-[5px] h-[5px] rounded-full bg-[#16a34a] align-middle"></i></td>
          <td class="whitespace-nowrap"><svg class="inline-block w-[14px] h-[14px] fill-current mr-[4px] align-[-2px]"><use href="#i-person"/></svg>鄭啟宏</td>
          <td>06-01 16:49</td>
          <td class="pt-[2px]"><div class="flex gap-[4px]"><a class="w-[32px] h-[31px] rounded-[4px] border border-[#6c757d] flex items-center justify-center"><svg class="w-[14.4px] h-[14.4px] fill-current"><use href="#i-eye"/></svg></a><a class="w-[32px] h-[31px] rounded-[4px] border border-[#6c757d] flex items-center justify-center"><svg class="w-[14.4px] h-[14.4px] fill-current text-[#6c757d] stroke-none"><use href="#i-pdf"/></svg></a><a class="w-[32px] h-[31px] rounded-[4px] border border-[#0d6efd] text-[#0d6efd] flex items-center justify-center"><svg class="w-[14.4px] h-[14.4px] fill-current"><use href="#i-mail"/></svg></a><a class="w-[32px] h-[31px] rounded-[4px] border border-[#dc3545] text-[#dc3545] flex items-center justify-center"><svg class="w-[14.4px] h-[14.4px] fill-current"><use href="#i-trash"/></svg></a></div></td>
        </tr>
        <!-- row 10 -->
        <tr class="h-[40px]">
          <td class="pt-[1px]"><a class="block text-[16px] font-bold leading-[21px] text-[#0d6efd]">60.248.142.179</a></td>
          <td><span class="inline-block relative top-[2px] w-[51px] h-[21px] rounded-[6px] bg-[#dc3545] text-white text-[12.5px] font-bold leading-[21px] text-center">Nmap</span></td>
          <td>漏洞腳本掃描</td>
          <td class="text-center"><svg class="inline-block w-[16px] h-[16px] fill-current ml-[3px]"><use href="#i-person"/></svg></td>
          <td><span class="inline-block relative top-[2px] w-[40px] h-[21px] rounded-[6px] bg-[#198754] text-white text-[12.5px] font-bold leading-[21px] text-center">完成</span></td>
          <td class="pr-[20px]! text-center"><i class="inline-block relative -top-[1px] w-[5px] h-[5px] rounded-full bg-[#dc3545] align-middle"></i></td>
          <td class="pr-[20px]! text-center text-[16px] font-bold text-[#ea580c]">1</td>
          <td class="pr-[20px]! text-center text-[16px] font-bold text-[#d97706]">2</td>
          <td class="pr-[10px]! text-center text-[16px] font-bold text-[#16a34a]">1</td>
          <td class="whitespace-nowrap"><svg class="inline-block w-[14px] h-[14px] fill-current mr-[4px] align-[-2px]"><use href="#i-person"/></svg>鄭啟宏</td>
          <td>06-01 16:30</td>
          <td class="pt-[2px]"><div class="flex gap-[4px]"><a class="w-[32px] h-[31px] rounded-[4px] border border-[#6c757d] flex items-center justify-center"><svg class="w-[14.4px] h-[14.4px] fill-current"><use href="#i-eye"/></svg></a><a class="w-[32px] h-[31px] rounded-[4px] border border-[#6c757d] flex items-center justify-center"><svg class="w-[14.4px] h-[14.4px] fill-current text-[#6c757d] stroke-none"><use href="#i-pdf"/></svg></a><a class="w-[32px] h-[31px] rounded-[4px] border border-[#0d6efd] text-[#0d6efd] flex items-center justify-center"><svg class="w-[14.4px] h-[14.4px] fill-current"><use href="#i-mail"/></svg></a><a class="w-[32px] h-[31px] rounded-[4px] border border-[#dc3545] text-[#dc3545] flex items-center justify-center"><svg class="w-[14.4px] h-[14.4px] fill-current"><use href="#i-trash"/></svg></a></div></td>
        </tr>
        <!-- row 11 -->
        <tr class="h-[40px]">
          <td class="pt-[1px]"><a class="block text-[16px] font-bold leading-[21px] text-[#0d6efd]">60.248.142.179</a></td>
          <td><span class="inline-block relative top-[2px] w-[51px] h-[21px] rounded-[6px] bg-[#dc3545] text-white text-[12.5px] font-bold leading-[21px] text-center">Nmap</span></td>
          <td>Web 服務掃描</td>
          <td class="text-center"><svg class="inline-block w-[16px] h-[16px] fill-current ml-[3px]"><use href="#i-person"/></svg></td>
          <td><span class="inline-block relative top-[2px] w-[40px] h-[21px] rounded-[6px] bg-[#198754] text-white text-[12.5px] font-bold leading-[21px] text-center">完成</span></td>
          <td class="pr-[20px]! text-center"><i class="inline-block relative -top-[1px] w-[5px] h-[5px] rounded-full bg-[#dc3545] align-middle"></i></td>
          <td class="pr-[20px]! text-center"><i class="inline-block relative -top-[1px] w-[5px] h-[5px] rounded-full bg-[#ea580c] align-middle"></i></td>
          <td class="pr-[20px]! text-center"><i class="inline-block relative -top-[1px] w-[5px] h-[5px] rounded-full bg-[#d97706] align-middle"></i></td>
          <td class="pr-[10px]! text-center text-[16px] font-bold text-[#16a34a]">3</td>
          <td class="whitespace-nowrap"><svg class="inline-block w-[14px] h-[14px] fill-current mr-[4px] align-[-2px]"><use href="#i-person"/></svg>鄭啟宏</td>
          <td>06-01 16:09</td>
          <td class="pt-[2px]"><div class="flex gap-[4px]"><a class="w-[32px] h-[31px] rounded-[4px] border border-[#6c757d] flex items-center justify-center"><svg class="w-[14.4px] h-[14.4px] fill-current"><use href="#i-eye"/></svg></a><a class="w-[32px] h-[31px] rounded-[4px] border border-[#6c757d] flex items-center justify-center"><svg class="w-[14.4px] h-[14.4px] fill-current text-[#6c757d] stroke-none"><use href="#i-pdf"/></svg></a><a class="w-[32px] h-[31px] rounded-[4px] border border-[#0d6efd] text-[#0d6efd] flex items-center justify-center"><svg class="w-[14.4px] h-[14.4px] fill-current"><use href="#i-mail"/></svg></a><a class="w-[32px] h-[31px] rounded-[4px] border border-[#dc3545] text-[#dc3545] flex items-center justify-center"><svg class="w-[14.4px] h-[14.4px] fill-current"><use href="#i-trash"/></svg></a></div></td>
        </tr>
        <!-- row 12 -->
        <tr class="h-[40px]">
          <td class="pt-[1px]"><a class="block text-[16px] font-bold leading-[21px] text-[#0d6efd]">60.248.142.179</a></td>
          <td><span class="inline-block relative top-[2px] w-[51px] h-[21px] rounded-[6px] bg-[#dc3545] text-white text-[12.5px] font-bold leading-[21px] text-center">Nmap</span></td>
          <td>標準掃描</td>
          <td class="text-center"><svg class="inline-block w-[16px] h-[16px] fill-current ml-[3px]"><use href="#i-person"/></svg></td>
          <td><span class="inline-block relative top-[2px] w-[40px] h-[21px] rounded-[6px] bg-[#198754] text-white text-[12.5px] font-bold leading-[21px] text-center">完成</span></td>
          <td class="pr-[20px]! text-center"><i class="inline-block relative -top-[1px] w-[5px] h-[5px] rounded-full bg-[#dc3545] align-middle"></i></td>
          <td class="pr-[20px]! text-center"><i class="inline-block relative -top-[1px] w-[5px] h-[5px] rounded-full bg-[#ea580c] align-middle"></i></td>
          <td class="pr-[20px]! text-center"><i class="inline-block relative -top-[1px] w-[5px] h-[5px] rounded-full bg-[#d97706] align-middle"></i></td>
          <td class="pr-[10px]! text-center text-[16px] font-bold text-[#16a34a]">4</td>
          <td class="whitespace-nowrap"><svg class="inline-block w-[14px] h-[14px] fill-current mr-[4px] align-[-2px]"><use href="#i-person"/></svg>鄭啟宏</td>
          <td>06-01 16:09</td>
          <td class="pt-[2px]"><div class="flex gap-[4px]"><a class="w-[32px] h-[31px] rounded-[4px] border border-[#6c757d] flex items-center justify-center"><svg class="w-[14.4px] h-[14.4px] fill-current"><use href="#i-eye"/></svg></a><a class="w-[32px] h-[31px] rounded-[4px] border border-[#6c757d] flex items-center justify-center"><svg class="w-[14.4px] h-[14.4px] fill-current text-[#6c757d] stroke-none"><use href="#i-pdf"/></svg></a><a class="w-[32px] h-[31px] rounded-[4px] border border-[#0d6efd] text-[#0d6efd] flex items-center justify-center"><svg class="w-[14.4px] h-[14.4px] fill-current"><use href="#i-mail"/></svg></a><a class="w-[32px] h-[31px] rounded-[4px] border border-[#dc3545] text-[#dc3545] flex items-center justify-center"><svg class="w-[14.4px] h-[14.4px] fill-current"><use href="#i-trash"/></svg></a></div></td>
        </tr>
      </tbody>
    </table>

    <div class="flex justify-between items-start pt-[8px]">
      <span class="text-[16px] leading-[24px] mt-[12px]">顯示第 1 至 12 筆結果，共 12 筆</span>
      <div class="flex h-[39px] rounded-[6px] overflow-hidden text-[16px] leading-[39px] text-center bg-[#e9ecef] text-[#5c636a]">
        <a class="w-[73px]">上一頁</a>
        <a class="w-[35px] bg-[#0d6efd] text-white">1</a>
        <a class="w-[73px]">下一頁</a>
      </div>
    </div>
  </section>
</main>
</body>
</html>
